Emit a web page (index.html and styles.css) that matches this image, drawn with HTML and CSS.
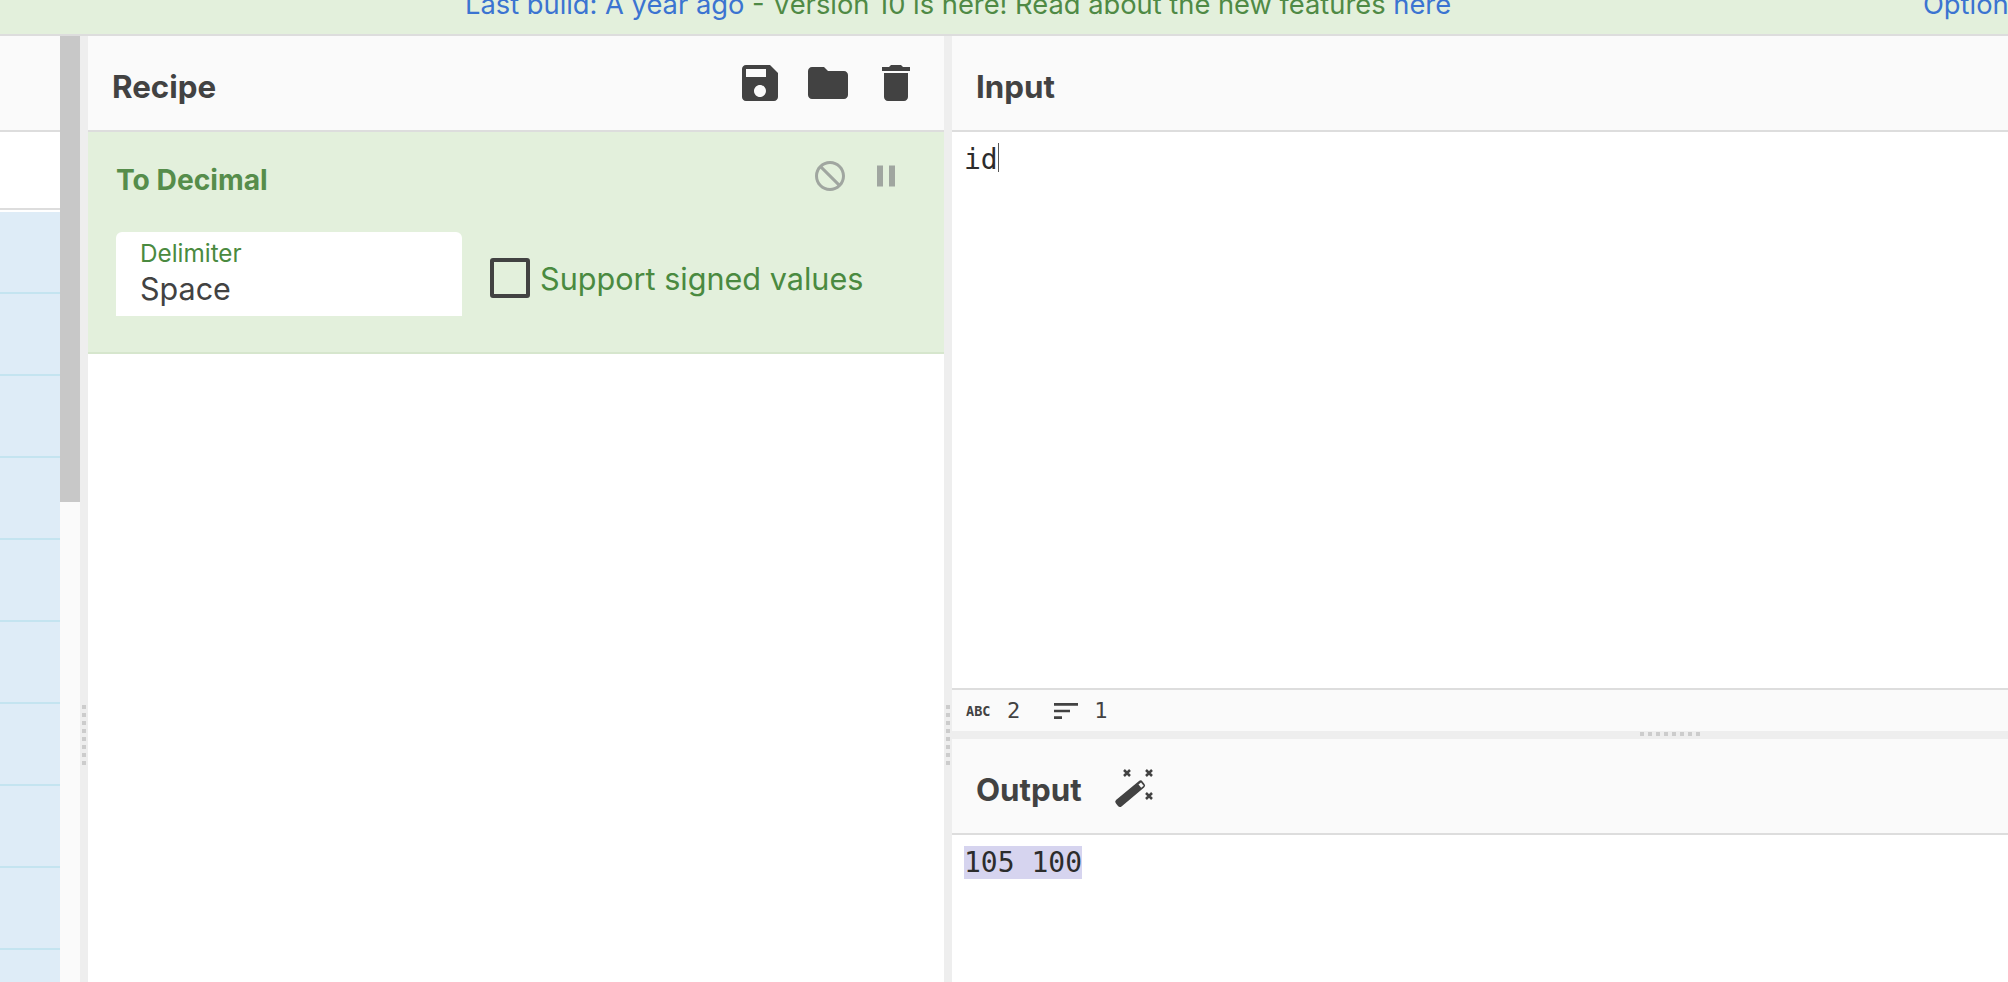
FILE: index.html
```html
<!DOCTYPE html>
<html lang="en">
<head>
<meta charset="utf-8">
<title>CyberChef</title>
<link rel="stylesheet" href="styles.css">
</head>
<body>
<div class="app">
  <header class="banner">
    <div class="banner-msg"><a class="link">Last build: A year ago</a> - Version 10 is here! Read about the new features <a class="link">here</a></div>
    <a class="link banner-opt">Options</a>
  </header>
  <main class="main">
    <section class="ops">
      <div class="head"></div>
      <div class="ops-search"></div>
      <div class="ops-list">
        <div class="op-row"></div><div class="op-row"></div><div class="op-row"></div>
        <div class="op-row"></div><div class="op-row"></div><div class="op-row"></div>
        <div class="op-row"></div><div class="op-row"></div><div class="op-row"></div>
      </div>
    </section>
    <div class="scrollbar"><div class="thumb"></div></div>
    <div class="gutter"><div class="grip"></div></div>
    <section class="recipe">
      <div class="head">
        <h2 class="title">Recipe</h2>
        <div class="tools">
          <svg class="ico48" viewBox="0 0 24 24"><path d="M17 3H5c-1.11 0-2 .9-2 2v14c0 1.1.89 2 2 2h14c1.1 0 2-.9 2-2V7l-4-4zm-5 16c-1.66 0-3-1.34-3-3s1.34-3 3-3 3 1.34 3 3-1.34 3-3 3zm3-10H5V5h10v4z"/></svg>
          <svg class="ico48" viewBox="0 0 24 24"><path d="M10 4H4c-1.1 0-1.99.9-1.99 2L2 18c0 1.1.9 2 2 2h16c1.1 0 2-.9 2-2V8c0-1.1-.9-2-2-2h-8l-2-2z"/></svg>
          <svg class="ico48" viewBox="0 0 24 24"><path d="M6 19c0 1.1.9 2 2 2h8c1.1 0 2-.9 2-2V7H6v12zM19 4h-3.5l-1-1h-5l-1 1H5v2h14V4z"/></svg>
        </div>
      </div>
      <div class="op">
        <div class="op-top">
          <div class="op-name">To Decimal</div>
          <div class="op-ctrl">
            <svg class="ico36" viewBox="0 0 24 24"><path d="M12 2C6.48 2 2 6.48 2 12s4.48 10 10 10 10-4.48 10-10S17.52 2 12 2zm0 18c-4.42 0-8-3.58-8-8 0-1.85.63-3.55 1.69-4.9L16.9 18.31C15.55 19.37 13.85 20 12 20zm6.31-3.1L7.1 5.69C8.45 4.63 10.15 4 12 4c4.42 0 8 3.58 8 8 0 1.85-.63 3.55-1.69 4.9z"/></svg>
            <svg class="ico36" viewBox="0 0 24 24"><path d="M6 19h4V5H6v14zm8-14v14h4V5h-4z"/></svg>
          </div>
        </div>
        <div class="op-args">
          <div class="field">
            <label class="field-label">Delimiter</label>
            <div class="field-value">Space</div>
          </div>
          <label class="check"><span class="box"></span><span>Support signed values</span></label>
        </div>
      </div>
    </section>
    <div class="gutter"><div class="grip"></div></div>
    <section class="io">
      <div class="head"><h2 class="title">Input</h2></div>
      <div class="input-area"><span class="code">id</span><span class="caret"></span></div>
      <div class="status">
        <span class="abc">ABC</span><span class="num">2</span>
        <svg class="ico32" viewBox="0 0 24 24"><path d="M3 18h6v-2H3v2zM3 6v2h18V6H3zm0 7h12v-2H3v2z"/></svg><span class="num num-lines">1</span>
      </div>
      <div class="hgutter"><div class="hgrip"></div></div>
      <div class="head">
        <h2 class="title">Output</h2>
        <svg class="wand" viewBox="0 0 40 40">
          <path d="M2 31 25 12a2.5 2.5 0 0 1 3.500 .4l2 2.500a2.500 2.500 0 0 1-.4 3.500L7.500 37.400a2.500 2.500 0 0 1-3.500-.4L2 34.500a2.500 2.500 0 0 1 0-3.500z"/>
          <path class="wand-tip" d="M24.500 15.500 27 13.500 29.700 16.800 27.200 18.800z"/>
          <path class="spark" d="M10 1l6 6M16 1l-6 6M32 1l6 6M38 1l-6 6M32 24l6 6M38 24l-6 6"/>
        </svg>
      </div>
      <div class="output-area"><span class="code sel">105 100</span></div>
    </section>
  </main>
</div>
</body>
</html>
```
FILE: styles.css
```css
* { box-sizing: border-box; }
html, body { margin: 0; height: 100%; overflow: hidden; background: #fff; }
body { font-family: Inter, "Liberation Sans", sans-serif; color: #424242; }
.app { display: flex; flex-direction: column; height: 982px; width: 2008px; overflow: hidden; }

.banner { flex: 0 0 36px; display: flex; background: #e3f0dc; border-bottom: 2px solid #dddddd; color: #4f8a45; font-size: 27.300px; line-height: 30px; overflow: hidden; white-space: nowrap; }
.banner-msg { flex: 0 0 1923px; padding-left: 465px; margin-top: -10px; }
.banner-opt { margin-top: -10px; }
.link { color: #3b74d1; }

.main { flex: 1; display: flex; min-height: 0; }
.head { flex: 0 0 96px; height: 96px; display: flex; align-items: center; background: #fafafa; border-bottom: 2px solid #dddddd; }
.title { margin: 8px 0 0 24px; font-size: 31.300px; font-weight: 700; color: #424242; }

.ops { flex: 0 0 60px; display: flex; flex-direction: column; overflow: hidden; }
.ops-search { flex: 0 0 78px; border-bottom: 2px solid #dddddd; }
.ops-list { flex: 1; margin-top: 2px; background: #deecf7; }
.op-row { height: 82px; border-bottom: 2px solid #c4e4f0; }

.scrollbar { flex: 0 0 20px; background: #fafafa; }
.thumb { height: 466px; background: #c8c8c8; }

.gutter { flex: 0 0 8px; background: #eeeeee; display: flex; justify-content: center; padding-top: 669px; }
.grip { width: 4px; height: 62px; background: repeating-linear-gradient(to bottom, #cccccc 0 4px, transparent 4px 8px); }

.recipe { flex: 0 0 856px; display: flex; flex-direction: column; }
.tools { margin-left: auto; margin-right: 24px; display: flex; gap: 20px; }
.ico48 { width: 48px; height: 48px; fill: #424242; display: block; }

.op { background: #e3f0dc; border-bottom: 2px solid #d6e6cd; padding: 26px 40px 34px 28px; height: 222px; }
.op-top { display: flex; justify-content: space-between; align-items: center; height: 36px; }
.op-name { font-size: 28.200px; font-weight: 700; color: #568d4b; margin-top: 8px; }
.op-ctrl { display: flex; gap: 20px; }
.ico36 { width: 36px; height: 36px; fill: #a0a6a0; display: block; }
.op-args { display: flex; align-items: center; margin-top: 38px; gap: 28px; }
.field { width: 346px; height: 84px; background: #fff; border-radius: 6px 6px 0 0; padding: 6px 24px 0; }
.field-label { display: block; font-size: 24.300px; line-height: 30px; color: #4a8a40; }
.field-value { font-size: 30.500px; line-height: 42px; color: #424242; }
.check { display: flex; align-items: center; gap: 10px; margin-top: 8px; font-size: 30.600px; color: #4a8a40; }
.box { width: 40px; height: 40px; border: 4px solid #424242; border-radius: 3px; }

.io { flex: 1; display: flex; flex-direction: column; min-width: 0; }
.input-area { flex: 0 0 556px; padding: 11px 12px 0; }
.code { font-family: "DejaVu Sans Mono", "Liberation Mono", monospace; font-size: 28px; line-height: 33px; color: #2c2c2c; display: inline-block; vertical-align: top; }
.caret { display: inline-block; width: 1px; height: 29px; background: #555555; vertical-align: top; }
.sel { background: #d6d4ef; }
.status { flex: 0 0 43px; display: flex; align-items: center; background: #fafafa; border-top: 2px solid #dddddd; padding-left: 14px; font-family: "DejaVu Sans Mono", monospace; }
.abc { font-size: 13.500px; font-weight: 700; width: 24px; color: #424242; }
.num { font-size: 22px; color: #424242; margin-left: 17px; }
.num-lines { margin-left: 12px; }
.ico32 { width: 32px; height: 32px; fill: #424242; margin-left: 30px; display: block; }
.hgutter { flex: 0 0 8px; background: #eeeeee; padding: 1px 0 0 688px; display: flex; }
.hgrip { width: 62px; height: 4px; background: repeating-linear-gradient(to right, #cccccc 0 4px, transparent 4px 8px); }
.wand { width: 40px; height: 40px; margin: 6px 0 0 32px; fill: #424242; }
.wand-tip { fill: #fafafa; }
.spark { fill: none; stroke: #424242; stroke-width: 2.500; }
.output-area { flex: 1; padding: 11px 12px 0; }
```
